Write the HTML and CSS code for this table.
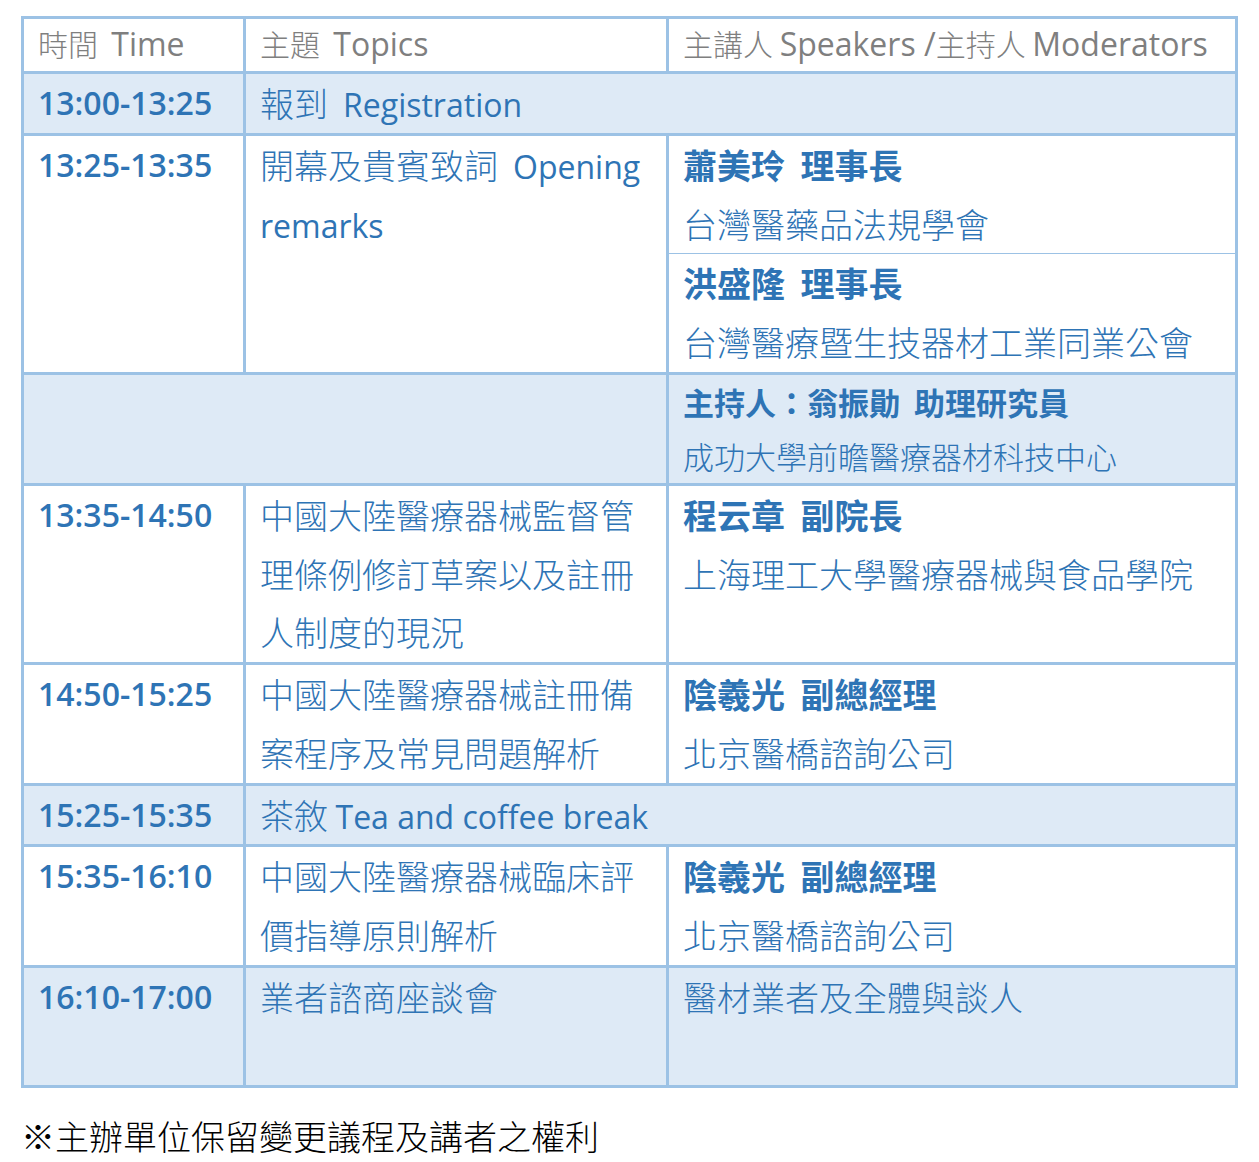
FILE: index.html
```html
<!DOCTYPE html>
<html lang="zh-Hant">
<head>
<meta charset="utf-8">
<title>議程 Agenda</title>
<link rel="stylesheet" href="styles.css">
</head>
<body>
<div class="page">
  <table class="agenda">
    <colgroup>
      <col class="c-time">
      <col class="c-topic">
      <col class="c-speaker">
    </colgroup>
    <thead>
      <tr class="head">
        <th>時間&nbsp; <span class="en">Time</span></th>
        <th>主題&nbsp; <span class="en">Topics</span></th>
        <th>主講人 <span class="en">Speakers /</span>主持人 <span class="en">Moderators</span></th>
      </tr>
    </thead>
    <tbody>
      <tr class="shade">
        <td class="time">13:00-13:25</td>
        <td colspan="2">報到&nbsp; <span class="en">Registration</span></td>
      </tr>
      <tr>
        <td class="time" rowspan="2">13:25-13:35</td>
        <td rowspan="2">開幕及貴賓致詞&nbsp; <span class="en">Opening</span> <span class="en">remarks</span></td>
        <td class="sub-top">
          <div class="name">蕭美玲&nbsp; 理事長</div>
          <div>台灣醫藥品法規學會</div>
        </td>
      </tr>
      <tr>
        <td class="sub-bottom">
          <div class="name">洪盛隆&nbsp; 理事長</div>
          <div>台灣醫療暨生技器材工業同業公會</div>
        </td>
      </tr>
      <tr class="shade mod">
        <td colspan="2"></td>
        <td>
          <div class="name">主持人：翁振勛&nbsp; 助理研究員</div>
          <div>成功大學前瞻醫療器材科技中心</div>
        </td>
      </tr>
      <tr>
        <td class="time">13:35-14:50</td>
        <td>中國大陸醫療器械監督管理條例修訂草案以及註冊人制度的現況</td>
        <td>
          <div class="name">程云章&nbsp; 副院長</div>
          <div>上海理工大學醫療器械與食品學院</div>
        </td>
      </tr>
      <tr>
        <td class="time">14:50-15:25</td>
        <td>中國大陸醫療器械註冊備案程序及常見問題解析</td>
        <td>
          <div class="name">陰羲光&nbsp; 副總經理</div>
          <div>北京醫橋諮詢公司</div>
        </td>
      </tr>
      <tr class="shade">
        <td class="time">15:25-15:35</td>
        <td colspan="2">茶敘 <span class="en">Tea and coffee break</span></td>
      </tr>
      <tr>
        <td class="time">15:35-16:10</td>
        <td>中國大陸醫療器械臨床評價指導原則解析</td>
        <td>
          <div class="name">陰羲光&nbsp; 副總經理</div>
          <div>北京醫橋諮詢公司</div>
        </td>
      </tr>
      <tr class="shade last">
        <td class="time">16:10-17:00</td>
        <td>業者諮商座談會</td>
        <td>醫材業者及全體與談人</td>
      </tr>
    </tbody>
  </table>
  <p class="note">※主辦單位保留變更議程及講者之權利</p>
</div>
</body>
</html>
```

FILE: styles.css
```css
html, body {
  margin: 0;
  padding: 0;
  background: #ffffff;
}

.page {
  padding: 16px 0 0 21px;
}

.agenda {
  border-collapse: collapse;
  table-layout: fixed;
  width: 1214px;
  border: 3px solid #9cc2e5;
  font-family: "Noto Sans CJK TC", "Noto Sans CJK SC", sans-serif;
  font-weight: 300;
}

.c-time { width: 222px; }
.c-topic { width: 423px; }
.c-speaker { width: 569px; }

.agenda th,
.agenda td {
  border: 3px solid #9cc2e5;
  padding: 0 12px 0 14px;
  vertical-align: top;
  text-align: left;
  color: #2e74b5;
  font-size: 34px;
  line-height: 58.75px;
}

.agenda th {
  color: #7f7f7f;
  font-weight: 300;
  font-size: 30px;
  line-height: 48px;
  padding-bottom: 4px;
}

.agenda th .en {
  font-size: 32px;
}

.en {
  font-family: "Open Sans", "Noto Sans", sans-serif;
  font-size: 32px;
  font-weight: 400;
  line-height: 1;
}

.agenda td.time {
  font-family: "Open Sans", "Noto Sans", sans-serif;
  font-size: 32px;
  font-weight: 600;
  padding-left: 14px;
}

.shade td {
  background: #deeaf6;
}

.name {
  font-weight: 700;
}

.agenda td.sub-top {
  border-bottom-width: 1px;
}

.agenda td.sub-bottom {
  border-top-width: 1px;
}

.mod td {
  font-size: 31px;
  line-height: 54px;
}

.last td {
  height: 117px;
}

.note {
  margin: 23px 0 0 0;
  font-family: "Noto Sans CJK TC", "Noto Sans CJK SC", sans-serif;
  font-weight: 300;
  font-size: 34px;
  line-height: 50px;
  color: #000000;
}
```
